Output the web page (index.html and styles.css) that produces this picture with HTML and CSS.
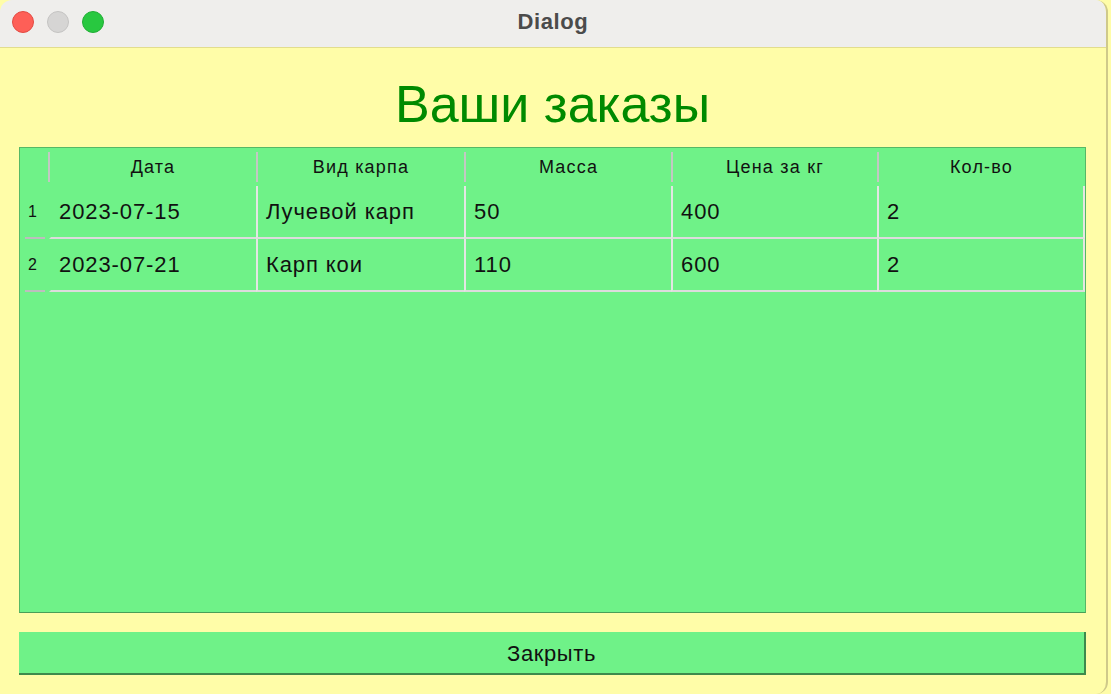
FILE: index.html
```html
<!DOCTYPE html>
<html>
<head>
<meta charset="utf-8">
<link rel="stylesheet" href="styles.css">
</head>
<body>
<div class="window">
  <div class="titlebar">
    <div class="lights">
      <span class="light red"></span>
      <span class="light grey"></span>
      <span class="light green"></span>
    </div>
    <div class="title">Dialog</div>
  </div>
  <div class="content">
    <h1 class="heading">Ваши заказы</h1>
    <div class="table">
      <div class="hdr corner"></div>
      <div class="hdr">Дата</div>
      <div class="hdr">Вид карпа</div>
      <div class="hdr">Масса</div>
      <div class="hdr">Цена за кг</div>
      <div class="hdr">Кол-во</div>

      <div class="rowhdr">1</div>
      <div class="cell first">2023-07-15</div>
      <div class="cell">Лучевой карп</div>
      <div class="cell">50</div>
      <div class="cell">400</div>
      <div class="cell">2</div>

      <div class="rowhdr">2</div>
      <div class="cell first">2023-07-21</div>
      <div class="cell">Карп кои</div>
      <div class="cell">110</div>
      <div class="cell">600</div>
      <div class="cell">2</div>
    </div>
    <button class="close">Закрыть</button>
  </div>
</div>
</body>
</html>
```

FILE: styles.css
```css
html, body {
  margin: 0;
  padding: 0;
  background: #fffda8;
  width: 1111px;
  height: 694px;
  overflow: hidden;
}

.window {
  width: 1106px;
  height: 694px;
  background: #fffda8;
  border-right: 2px solid #cfc98a;
  border-radius: 12px;
  overflow: hidden;
  font-family: "Liberation Sans", Arial, sans-serif;
}

.titlebar {
  height: 47px;
  background: #efeeec;
  border-bottom: 1px solid #e2dd8d;
  display: flex;
  align-items: center;
  justify-content: center;
  position: relative;
}

.lights {
  position: absolute;
  left: 12px;
  top: 11px;
  display: flex;
  gap: 13px;
}

.light {
  width: 22px;
  height: 22px;
  border-radius: 50%;
  box-sizing: border-box;
}
.light.red { background: #fe5f57; border: 1px solid #e24a42; }
.light.grey { background: #d6d5d4; border: 1px solid #c4c3c2; }
.light.green { background: #28c840; border: 1px solid #22ad36; }

.title {
  font-weight: bold;
  font-size: 22px;
  letter-spacing: 0.6px;
  color: #4b4b4b;
  margin-top: -3px;
}

.content {
  padding: 0 20px 0 19px;
  display: flex;
  flex-direction: column;
}

.heading {
  margin: 26px 0 0 0;
  height: 73px;
  font-weight: normal;
  font-size: 52px;
  line-height: 60px;
  color: #008a00;
  text-align: center;
}

.table {
  height: 464px;
  background: #6ff288;
  border: 1px solid #56b866;
  border-bottom-color: #4a9e58;
  display: grid;
  grid-template-columns: 29px 208px 208px 207px 206px 207px;
  grid-template-rows: 38px 53px 53px;
  align-content: start;
}

.hdr {
  display: flex;
  align-items: center;
  justify-content: center;
  font-size: 18px;
  letter-spacing: 1.2px;
  color: #111;
  position: relative;
  padding-top: 1px;
}
.hdr::before {
  content: "";
  position: absolute;
  left: -1px;
  top: 4px;
  bottom: 4px;
  width: 2px;
  background: #c3c8c3;
}
.hdr.corner::before { display: none; }
.hdr:last-child::after {
  content: "";
  position: absolute;
  right: 0;
  top: 4px;
  bottom: 4px;
  width: 2px;
  background: #c3c8c3;
}

.rowhdr {
  display: flex;
  align-items: center;
  padding-left: 8px;
  font-size: 16px;
  color: #111;
  position: relative;
  padding-bottom: 1px;
}
.rowhdr::after {
  content: "";
  position: absolute;
  left: 5px;
  width: 20px;
  bottom: 0;
  height: 2px;
  background: #bdbdbd;
}

.cell {
  display: flex;
  align-items: center;
  padding-left: 8px;
  font-size: 22px;
  letter-spacing: 0.9px;
  color: #111;
  border-left: 2px solid #e3e6e3;
  border-bottom: 2px solid #dcdcdc;
  margin-left: -1px;
}
.cell.first {
  border-left-color: transparent;
  margin-left: 0;
}
.cell:nth-child(6n) {
  border-right: 2px solid #e3e6e3;
}

.close {
  margin-top: 19px;
  height: 43px;
  background: #6ff288;
  border: none;
  border-right: 2px solid #3e8a4c;
  border-bottom: 2px solid #3e8a4c;
  font-family: "Liberation Sans", Arial, sans-serif;
  font-size: 22px;
  letter-spacing: 0.6px;
  color: #111;
  padding: 3px 0 0 0;
}
```
